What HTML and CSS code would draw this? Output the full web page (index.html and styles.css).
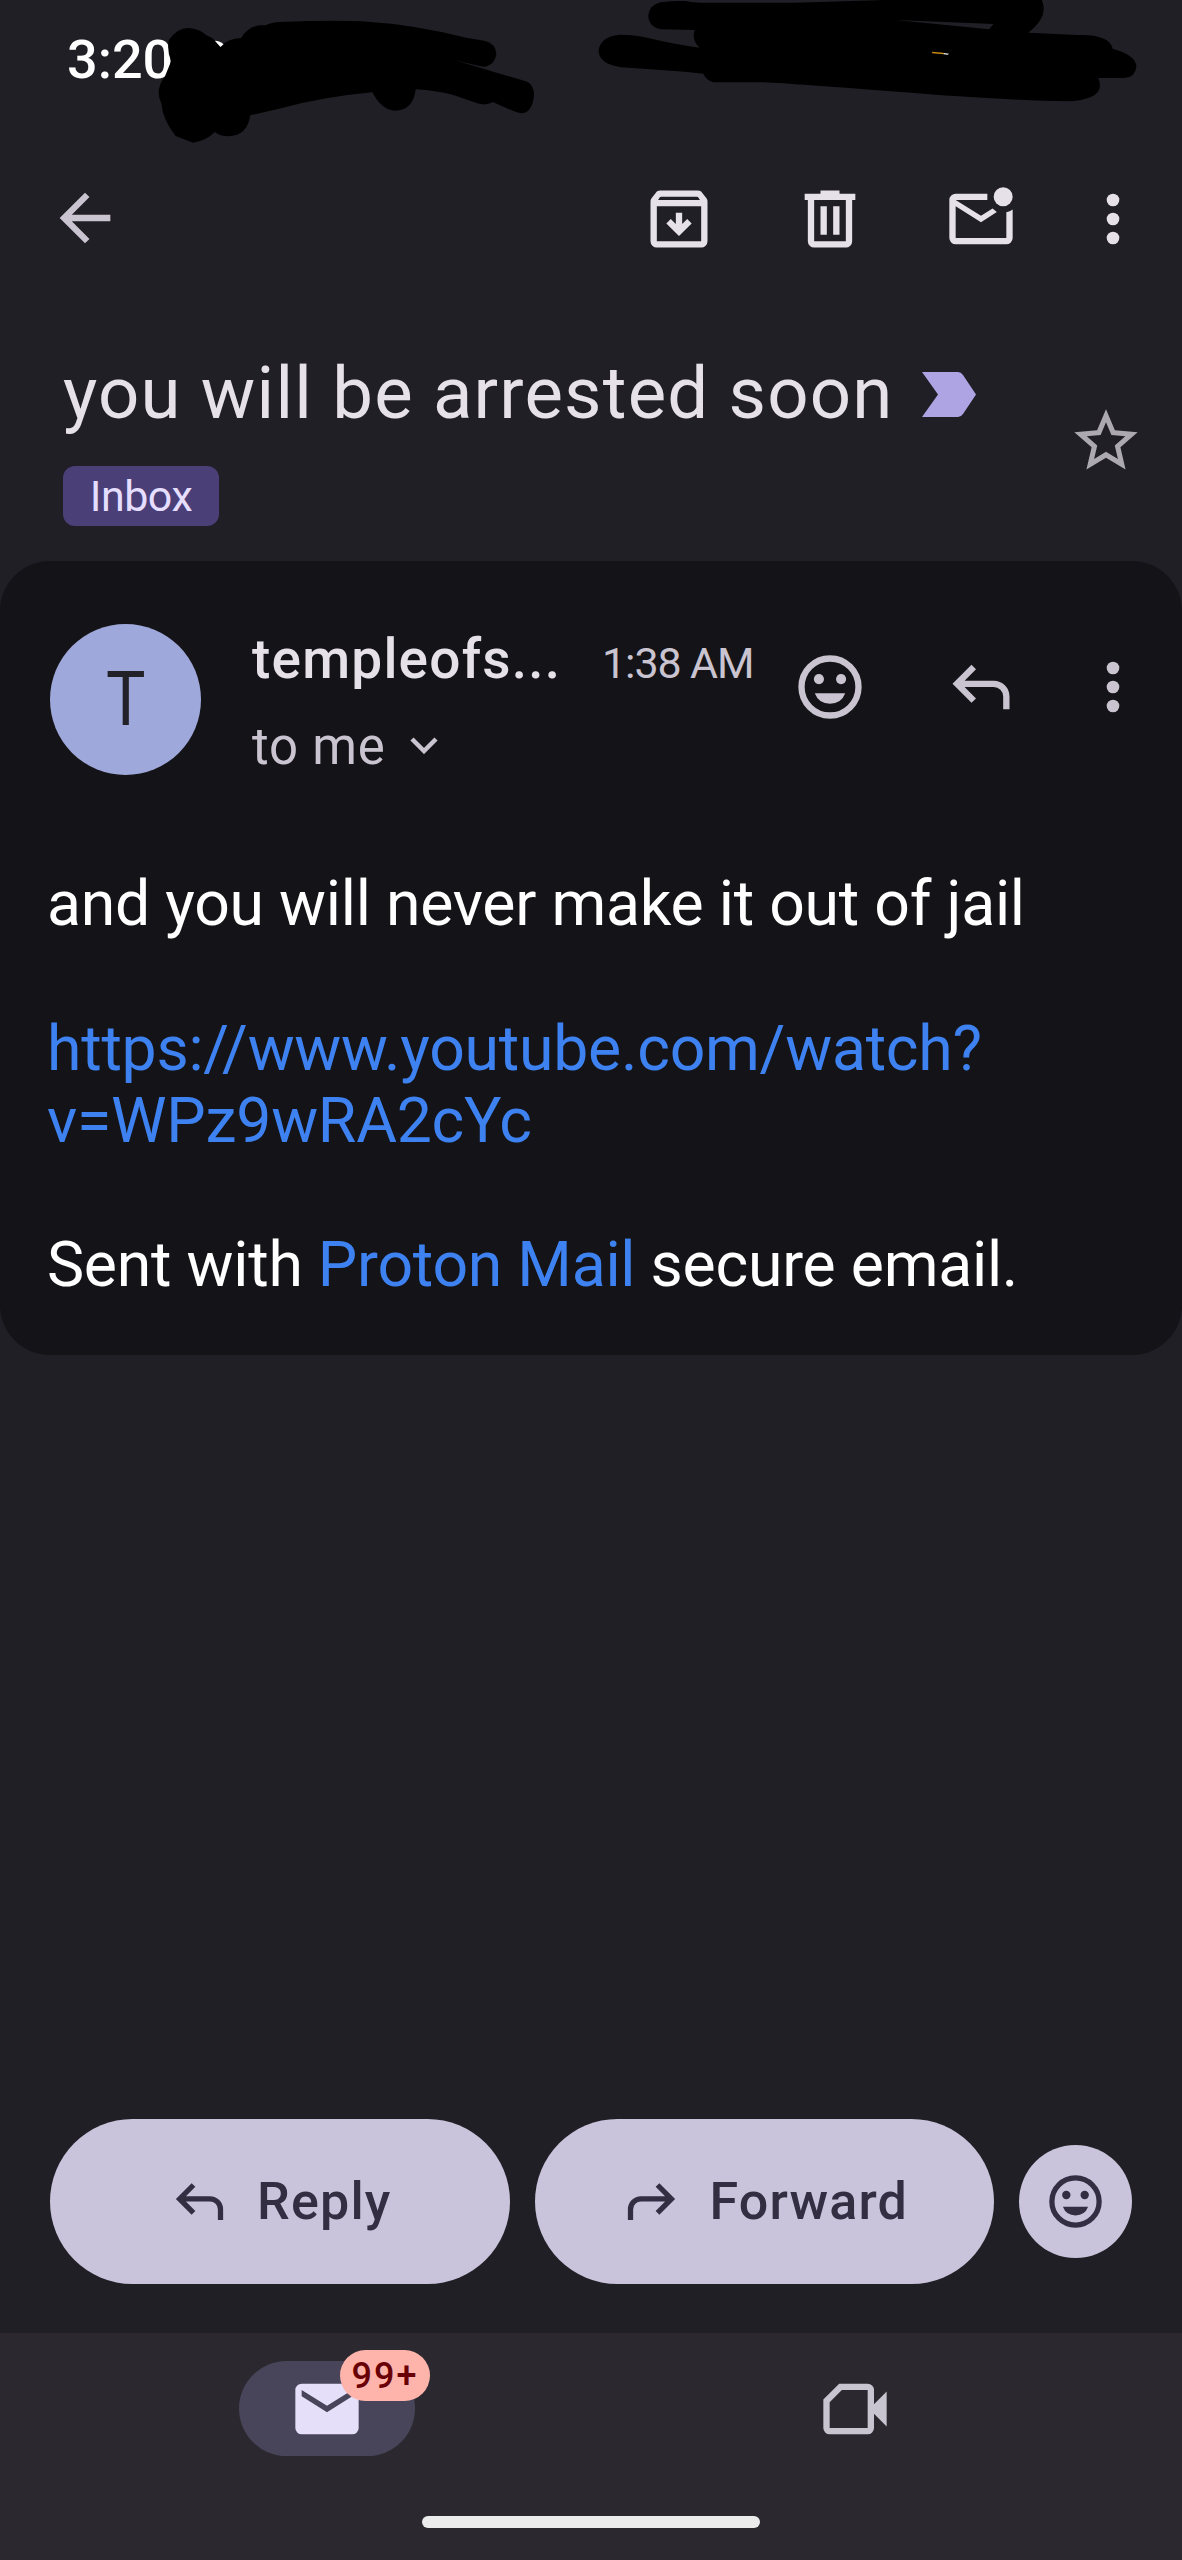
FILE: index.html
```
<!DOCTYPE html>
<html lang="en">

<head>
    <meta charset="utf-8">
    <title>Mail</title>
    <link rel="stylesheet" href="styles.css">
</head>

<body>

<div class="screen">

    <div class="statusBar">
        <span class="clock">3:20</span>
        <svg class="marker markerLeft" viewBox="0 0 1568 450" preserveAspectRatio="none">
            <path d="M448 120Q470 84 500 84Q530 86 548 106Q562 112 572 124L584 140Q604 116 640 114Q660 76 695 76L706 76Q716 68 740 66Q880 60 960 64Q1100 74 1240 114L1285 122Q1316 130 1317 163Q1310 200 1282 200Q1260 196 1205 180L1395 244Q1416 252 1417 285Q1412 340 1382 340Q1368 338 1308 306Q1290 318 1266 310L1205 286Q1160 272 1103 268Q1096 332 1048 332Q1012 330 988 277Q860 290 740 326L664 346Q656 408 606 409Q585 409 570 396Q545 424 512 428L466 408Q432 360 428 310Q410 270 438 228L454 184Q442 150 448 120Z"/>
            <path class="glint" d="M570 122Q584 122 593 133L585 141Z"/>
        </svg>
        <svg class="marker markerRight" viewBox="0 0 1568 450" preserveAspectRatio="none">
            <path d="M185 7Q220 2 250 3Q270 8 290 8L540 8L780 0H1196Q1216 50 1160 98L1290 105Q1375 102 1384 146Q1446 165 1447 200Q1444 232 1415 234L1346 234Q1370 300 1260 304Q1150 302 930 286Q600 256 460 247L325 247Q305 240 298 221Q200 210 80 202Q22 192 20 153Q24 110 75 104Q120 104 160 116Q220 132 288 143Q266 120 275 90L185 88Q152 80 152 45Q155 15 185 7Z"/>
            <path class="gap" d="M808 60L1068 72L1056 88Z"/>
            <path class="spark" d="M905 155L935 158L936 163L905 160Z"/>
            <path class="glint" d="M935 159L950 161L946 164L936 163Z"/>
        </svg>
    </div>

    <div class="appBar">
        <svg class="icon back" viewBox="0 0 24 24"><path d="M12 20l-8-8 8-8 1.42 1.4L7.83 11H20v2H7.83l5.59 5.6z"/></svg>
        <div class="barActions">
            <svg class="icon" viewBox="0 0 24 24"><path fill-rule="evenodd" d="M5 21q-.83 0-1.41-.59T3 19V6.53q0-.35.11-.68.12-.32.34-.6l1.25-1.52q.2-.35.55-.54T6 3h12q.4 0 .75.19t.55.54l1.25 1.52q.22.28.34.6.11.33.11.68V19q0 .83-.59 1.41T19 21zM5.4 6h13.2l-.4-.65q-.15-.35-.6-.35H6.4q-.45 0-.6.35zM5 8v11h14V8zM12 17.4l4-4-1.4-1.4-1.6 1.6V10h-2v3.6L9.4 12 8 13.4z"/></svg>
            <svg class="icon" viewBox="0 0 24 24"><path fill-rule="evenodd" d="M7 21q-.83 0-1.41-.59T5 19V6H4V4h5V3h6v1h5v2h-1v13q0 .83-.59 1.41T17 21zM17 6H7v13h10zM9 17h2V8H9zm4 0h2V8h-2z"/></svg>
            <svg class="icon" viewBox="0 0 24 24"><path d="M4 20q-.83 0-1.41-.59T2 18V6q0-.83.59-1.41T4 4h10v2H4l8 5 3.65-2.28 1.35 1.1L12 13 4 8v10h16V9.9q1.1-.3 2-.9v9q0 .83-.59 1.41T20 20z"/><circle cx="19" cy="5" r="3"/></svg>
            <svg class="icon more" viewBox="0 0 24 24"><circle cx="12" cy="6" r="2"/><circle cx="12" cy="12" r="2"/><circle cx="12" cy="18" r="2"/></svg>
        </div>
    </div>

    <div class="subjectRow">
        <div class="subject">
            <div class="subjectLine">
                <h1>you will be arrested soon</h1>
                <svg class="important" viewBox="0 0 54 45"><path d="M0 0H36Q39 0 41 3L54 22.5 41 42Q39 45 36 45H0L16 22.5z"/></svg>
            </div>
            <span class="label">Inbox</span>
        </div>
        <svg class="icon star" viewBox="0 0 24 24"><path d="M22 9.24l-7.19-.62L12 2 9.19 8.63 2 9.24l5.46 4.73L5.82 21 12 17.27 18.18 21l-1.63-7.03zM12 15.4l-3.76 2.27 1-4.28-3.32-2.88 4.38-.38L12 6.1l1.71 4.04 4.38.38-3.32 2.88 1 4.28z"/></svg>
    </div>

    <div class="message">
        <div class="messageHeader">
            <div class="avatar"><span>T</span></div>
            <div class="sender">
                <div class="senderLine">
                    <span class="name">templeofs...</span>
                    <span class="time">1:38 AM</span>
                </div>
                <div class="recipient">
                    to me
                    <svg class="chevron" viewBox="0 0 28 17"><path d="M2 2l12 12L26 2"/></svg>
                </div>
            </div>
            <div class="messageActions">
                <svg class="icon" viewBox="0 0 24 24"><circle class="ring" cx="12" cy="12" r="9"/><circle cx="8.5" cy="9.5" r="1.6"/><circle cx="15.5" cy="9.5" r="1.6"/><path d="M7.2 14h9.6Q15.6 17.3 12 17.3T7.2 14z"/></svg>
                <svg class="icon" viewBox="0 0 24 24"><path d="M19 19v-4q0-1.25-.875-2.125T16 12H6.825l3.6 3.6L9 17l-6-6 6-6 1.425 1.4-3.6 3.6H16q2.075 0 3.537 1.463T21 15v4z"/></svg>
                <svg class="icon more" viewBox="0 0 24 24"><circle cx="12" cy="6" r="2"/><circle cx="12" cy="12" r="2"/><circle cx="12" cy="18" r="2"/></svg>
            </div>
        </div>

        <div class="messageBody">
            <p>and you will never make it out of jail</p>
            <p><a>https://www.youtube.com/watch?<br>v=WPz9wRA2cYc</a></p>
            <p>Sent with <a>Proton Mail</a> secure email.</p>
        </div>
    </div>

    <div class="replyBar">
        <div class="pill">
            <svg class="icon" viewBox="0 0 24 24"><path d="M19 19v-4q0-1.25-.875-2.125T16 12H6.825l3.6 3.6L9 17l-6-6 6-6 1.425 1.4-3.6 3.6H16q2.075 0 3.537 1.463T21 15v4z"/></svg>
            <span>Reply</span>
        </div>
        <div class="pill">
            <svg class="icon flip" viewBox="0 0 24 24"><path d="M19 19v-4q0-1.25-.875-2.125T16 12H6.825l3.6 3.6L9 17l-6-6 6-6 1.425 1.4-3.6 3.6H16q2.075 0 3.537 1.463T21 15v4z"/></svg>
            <span>Forward</span>
        </div>
        <div class="emojiButton">
            <svg class="icon" viewBox="0 0 24 24"><circle class="ring" cx="12" cy="12" r="9"/><circle cx="8.5" cy="9.5" r="1.6"/><circle cx="15.5" cy="9.5" r="1.6"/><path d="M7.2 14h9.6Q15.6 17.3 12 17.3T7.2 14z"/></svg>
        </div>
    </div>

    <div class="navBar">
        <div class="tabs">
            <div class="tab">
                <div class="tabActive">
                    <svg class="icon" viewBox="0 0 24 24"><path fill-rule="evenodd" d="M4 20q-.83 0-1.41-.59T2 18V6q0-.83.59-1.41T4 4h16q.83 0 1.41.59T22 6v12q0 .83-.59 1.41T20 20zM12 13l8-5V6l-8 5-8-5v2z"/></svg>
                    <span class="badge">99+</span>
                </div>
            </div>
            <div class="tab">
                <svg class="icon" viewBox="0 0 24 24"><path fill-rule="evenodd" d="M4 20q-.83 0-1.41-.59T2 18V9l5-5h9q.83 0 1.41.59T18 6v4.5l4-4v11l-4-4V18q0 .83-.59 1.41T16 20zM4 18h12V6H7.85L4 9.85z"/></svg>
            </div>
        </div>
        <div class="homeBar"></div>
    </div>

</div>

</body>

</html>
```
FILE: styles.css
```
body {
    margin: 0;
    background-color: #201f25;
    font-family: Roboto, "Liberation Sans", sans-serif;
}

.screen {
    display: flex;
    flex-direction: column;
    width: 1182px;
    height: 2560px;
    overflow: hidden;
}

.icon {
    width: 76px;
    height: 76px;
    flex: none;
    fill: currentColor;
}

.ring {
    fill: none;
    stroke: currentColor;
    stroke-width: 2;
}

/* status bar */

.statusBar {
    position: relative;
    height: 120px;
    flex: none;
}

.clock {
    display: block;
    padding-left: 67px;
    line-height: 119px;
    font-size: 54px;
    font-weight: 500;
    color: #fff;
}

.marker {
    position: absolute;
    top: 0;
    width: 591px;
    height: 150px;
}

.markerLeft {
    left: 0;
}

.markerRight {
    right: 0;
}

.glint {
    fill: #fff;
}

.gap {
    fill: #201f25;
}

.spark {
    fill: #c98a12;
}

/* top actions */

.appBar {
    display: flex;
    align-items: center;
    justify-content: space-between;
    height: 198px;
    flex: none;
    box-sizing: border-box;
    padding: 0 31px 0 47px;
    color: #e6e0e9;
}

.back {
    margin-bottom: 2px;
    color: #c9c4d0;
}

.barActions,
.messageActions {
    display: flex;
    gap: 75px;
}

.more {
    margin-left: -19px;
}

/* subject */

.subjectRow {
    display: flex;
    justify-content: space-between;
    height: 243px;
    flex: none;
    box-sizing: border-box;
    padding: 31px 38px 0 63px;
}

.subjectLine {
    display: flex;
    align-items: center;
    height: 90px;
}

.subject h1 {
    width: 859px;
    margin: 0;
    font-size: 72.5px;
    font-weight: 400;
    line-height: 90px;
    letter-spacing: 1.2px;
    white-space: nowrap;
    color: #e6e0e9;
}

.important {
    width: 54px;
    height: 45px;
    fill: #aea4e3;
}

.label {
    display: block;
    width: 156px;
    height: 60px;
    margin-top: 27px;
    border-radius: 12px;
    background-color: #4a4077;
    text-align: center;
    font-size: 43px;
    line-height: 60px;
    letter-spacing: -0.5px;
    color: #e5deff;
}

.star {
    margin-top: 54px;
    color: #aca9b1;
}

/* message card */

.message {
    height: 794px;
    flex: none;
    box-sizing: border-box;
    padding: 63px 31px 0 50px;
    border-radius: 50px;
    background-color: #141317;
}

.messageHeader {
    display: flex;
    height: 152px;
    color: #c9c4d0;
}

.avatar {
    width: 151px;
    height: 151px;
    flex: none;
    border-radius: 50%;
    background-color: #9fa8da;
    text-align: center;
    font-size: 76px;
    line-height: 151px;
    color: #212127;
}

.avatar span {
    display: inline-block;
    transform: scaleX(0.87);
}

.sender {
    flex: 1;
    padding-left: 51px;
}

.senderLine {
    display: flex;
    align-items: baseline;
    height: 70px;
    line-height: 70px;
}

.name {
    width: 350px;
    font-size: 55px;
    font-weight: 500;
    letter-spacing: 1.2px;
    color: #e6e0e9;
}

.time {
    font-size: 43px;
    letter-spacing: -1.1px;
    white-space: nowrap;
}

.recipient {
    display: flex;
    align-items: center;
    gap: 24px;
    margin-top: 18px;
    font-size: 51px;
    line-height: 70px;
    letter-spacing: 0.8px;
}

.chevron {
    width: 28px;
    height: 17px;
    margin-bottom: 3px;
    fill: none;
    stroke: currentColor;
    stroke-width: 4.5;
}

.messageActions {
    padding-top: 25px;
}

.messageBody {
    margin-top: 92px;
    margin-left: -3px;
    font-size: 62.5px;
    line-height: 72.3px;
    letter-spacing: -0.24px;
    color: #fff;
    white-space: nowrap;
}

.messageBody p {
    margin: 0 0 72.3px;
}

.messageBody a {
    color: #3d82f0;
}

/* reply buttons */

.replyBar {
    display: flex;
    align-items: center;
    gap: 25px;
    margin-top: auto;
    padding: 0 50px 49px;
    color: #332e42;
}

.replyBar .icon {
    width: 63px;
    height: 63px;
}

.pill {
    display: flex;
    align-items: center;
    justify-content: center;
    gap: 26px;
    flex: 1;
    height: 165px;
    border-radius: 83px;
    background-color: #c9c3dc;
    font-size: 52px;
    font-weight: 500;
    letter-spacing: 1.2px;
}

.flip {
    transform: scaleX(-1);
}

.emojiButton {
    display: flex;
    align-items: center;
    justify-content: center;
    width: 113px;
    height: 113px;
    border-radius: 50%;
    background-color: #c9c3dc;
}

/* bottom navigation */

.navBar {
    height: 227px;
    flex: none;
    background-color: #2b292f;
    color: #c9c5d0;
}

.tabs {
    display: flex;
    height: 151px;
    padding: 0 63px;
}

.tab {
    display: flex;
    flex: 1;
    align-items: center;
    justify-content: center;
}

.tabActive {
    position: relative;
    display: flex;
    align-items: center;
    justify-content: center;
    width: 176px;
    height: 95px;
    border-radius: 48px;
    background-color: #48455a;
    color: #e5dff9;
}

.badge {
    position: absolute;
    left: 101px;
    top: -11px;
    width: 90px;
    height: 51px;
    border-radius: 26px;
    background-color: #ffb4ab;
    text-align: center;
    font-size: 36px;
    font-weight: 500;
    line-height: 53px;
    letter-spacing: 2px;
    color: #690005;
}

.homeBar {
    width: 338px;
    height: 12px;
    margin: 32px auto 0;
    border-radius: 6px;
    background-color: #ececec;
}
```
